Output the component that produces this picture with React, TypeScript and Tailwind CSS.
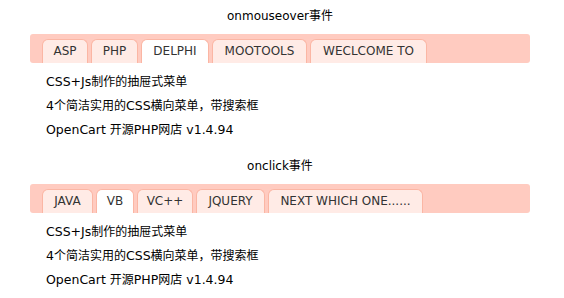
import React from 'react';

type Tab = { label: string; width: string; active?: boolean };

const hoverTabs: Tab[] = [
  { label: 'ASP', width: 'w-[46px]' },
  { label: 'PHP', width: 'w-[47px]' },
  { label: 'DELPHI', width: 'w-[68px]', active: true },
  { label: 'MOOTOOLS', width: 'w-[95px]' },
  { label: 'WECLCOME TO', width: 'w-[117px]' },
];

const clickTabs: Tab[] = [
  { label: 'JAVA', width: 'w-[51px]' },
  { label: 'VB', width: 'w-[38px]', active: true },
  { label: 'VC++', width: 'w-[56px]' },
  { label: 'JQUERY', width: 'w-[69px]' },
  { label: 'NEXT WHICH ONE......', width: 'w-[155px]' },
];

const links = ['CSS+Js制作的抽屉式菜单', '4个简洁实用的CSS横向菜单，带搜索框', 'OpenCart 开源PHP网店 v1.4.94'];

// Latin runs in the original render a touch wider than the CJK ones
const MixedText: React.FC<{ text: string }> = ({ text }) => (
  <>
    {text.split(/([\u3000-\u9fff\uff00-\uffef]+)/).map((part, i) =>
      /[\u3000-\u9fff\uff00-\uffef]/.test(part) ? (
        <span key={i}>{part}</span>
      ) : (
        <span key={i} className="text-[12.5px]">
          {part}
        </span>
      )
    )}
  </>
);

const TabSection: React.FC<{ title: string; tabs: Tab[] }> = ({ title, tabs }) => (
  <div className="h-[150px] pt-[6px]">
    {/* Title */}
    <div className="h-[20px] leading-[20px] text-center text-black">{title}</div>

    {/* Tab bar */}
    <div className="mt-[8px] h-[29px] bg-[#ffcbc0] rounded-[3px] pt-[5px] pl-[12px] flex gap-[3px]">
      {tabs.map((tab) => (
        <div
          key={tab.label}
          className={`${tab.width} h-[24px] leading-[23px] text-center text-[#333] border border-b-0 border-[#fbb6a4] rounded-t-[6px] whitespace-nowrap ${
            tab.active ? 'bg-white' : 'bg-[#ffebe6]'
          }`}
        >
          {tab.label}
        </div>
      ))}
    </div>

    {/* Content */}
    <ul className="mt-[7px] pl-[16px]">
      {links.map((text) => (
        <li key={text} className="h-[24px] leading-[24px] text-black">
          <MixedText text={text} />
        </li>
      ))}
    </ul>
  </div>
);

const App: React.FC = () => {
  return (
    <div className="w-[564px] h-[298px] bg-white text-[12px] font-['DejaVu_Sans','Noto_Sans_CJK_SC',sans-serif] overflow-hidden">
      <div className="ml-[30px] w-[500px]">
        <TabSection title="onmouseover事件" tabs={hoverTabs} />
        <TabSection title="onclick事件" tabs={clickTabs} />
      </div>
    </div>
  );
};

export default App;
